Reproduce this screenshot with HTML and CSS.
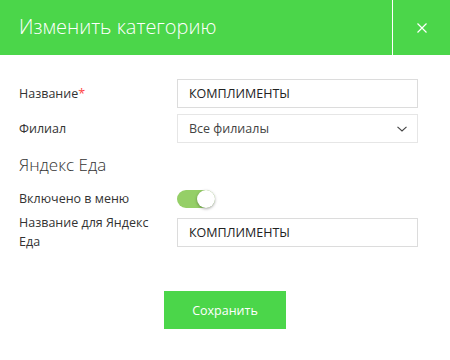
FILE: index.html
```html
<!DOCTYPE html>
<html lang="ru">
<head>
  <meta charset="UTF-8">
  <meta name="viewport" content="width=device-width, initial-scale=1.0">
  <title>Изменить категорию</title>
  <link rel="stylesheet" href="styles.css">
</head>
<body>

  <div class="modal">
    <div class="modal-header">
      <div class="modal-title">Изменить категорию</div>
      <button class="modal-close" aria-label="Закрыть">
        <svg width="10" height="10" viewBox="0 0 10 10">
          <path d="M0.5 0.5 L9.5 9.5 M9.5 0.5 L0.5 9.5" stroke="#fff" stroke-width="1.2" fill="none"/>
        </svg>
      </button>
    </div>

    <form class="modal-body">
      <div class="row">
        <label class="label">Название<span class="req">*</span></label>
        <input type="text" class="field" value="КОМПЛИМЕНТЫ">
      </div>
      <div class="row">
        <label class="label">Филиал</label>
        <div class="field select">
          <span>Все филиалы</span>
          <svg width="10" height="6" viewBox="0 0 10 6">
            <path d="M0.5 0.8 L5 5 L9.5 0.8" stroke="#444" stroke-width="1.1" fill="none"/>
          </svg>
        </div>
      </div>

      <h3 class="section">Яндекс Еда</h3>

      <div class="row row-toggle">
        <label class="label">Включено в меню</label>
        <span class="toggle on"><span class="knob"></span></span>
      </div>
      <div class="row">
        <label class="label">Название для Яндекс Еда</label>
        <input type="text" class="field" value="КОМПЛИМЕНТЫ">
      </div>

      <div class="actions">
        <button type="button" class="btn-save">Сохранить</button>
      </div>
    </form>
  </div>

</body>
</html>
```

FILE: styles.css
```css
* {
  box-sizing: border-box;
}
body {
  margin: 0;
  background: #fff;
  font-family: "Open Sans", "Noto Sans", sans-serif;
  color: #333;
}
.modal {
  width: 450px;
  height: 360px;
  background: #fff;
}
.modal-header {
  display: flex;
  height: 55px;
  background: #4bd64a;
  color: #fff;
}
.modal-title {
  flex: 1;
  display: flex;
  align-items: center;
  padding-left: 19px;
  padding-bottom: 2px;
  font-size: 20px;
  font-weight: 300;
}
.modal-close {
  width: 58px;
  border: none;
  border-left: 1px solid #fff;
  background: transparent;
  display: flex;
  align-items: center;
  justify-content: center;
  padding: 0 0 0 1px;
  cursor: pointer;
}
.modal-body {
  padding: 24px 32px 0 19px;
  display: flex;
  flex-direction: column;
}
.row {
  display: flex;
  align-items: center;
  margin-bottom: 6px;
}
.label {
  width: 158px;
  padding-right: 20px;
  font-size: 12.5px;
  line-height: 19px;
  color: #333;
}
.req {
  color: #f44;
}
.field {
  width: 241px;
  height: 29px;
  border: 1px solid #dcdcdc;
  padding: 0 11px;
  font-family: inherit;
  font-size: 12.5px;
  color: #222;
  outline: none;
}
.select {
  display: flex;
  align-items: center;
  justify-content: space-between;
  border-color: #e6e6e6;
  color: #444;
  padding-right: 10px;
}
.section {
  margin: 5px 0 13px;
  font-size: 17px;
  font-weight: 300;
  line-height: 22px;
  color: #333;
}
.row-toggle {
  margin-bottom: 5px;
}
.toggle {
  position: relative;
  width: 38px;
  height: 18px;
  border-radius: 9px;
  background: #e0e0e0;
  display: inline-block;
}
.toggle.on {
  background: #95cf67;
}
.knob {
  position: absolute;
  top: 0;
  right: 0;
  width: 18px;
  height: 18px;
  border-radius: 50%;
  background: #fff;
  box-shadow: 0 1px 3px rgba(0,0,0,0.35);
}
.actions {
  display: flex;
  justify-content: center;
  padding-left: 13px;
  margin-top: 34px;
}
.btn-save {
  width: 122px;
  height: 38px;
  border: none;
  background: #4bd64a;
  color: #fff;
  font-family: inherit;
  font-size: 12.5px;
  cursor: pointer;
}
```
